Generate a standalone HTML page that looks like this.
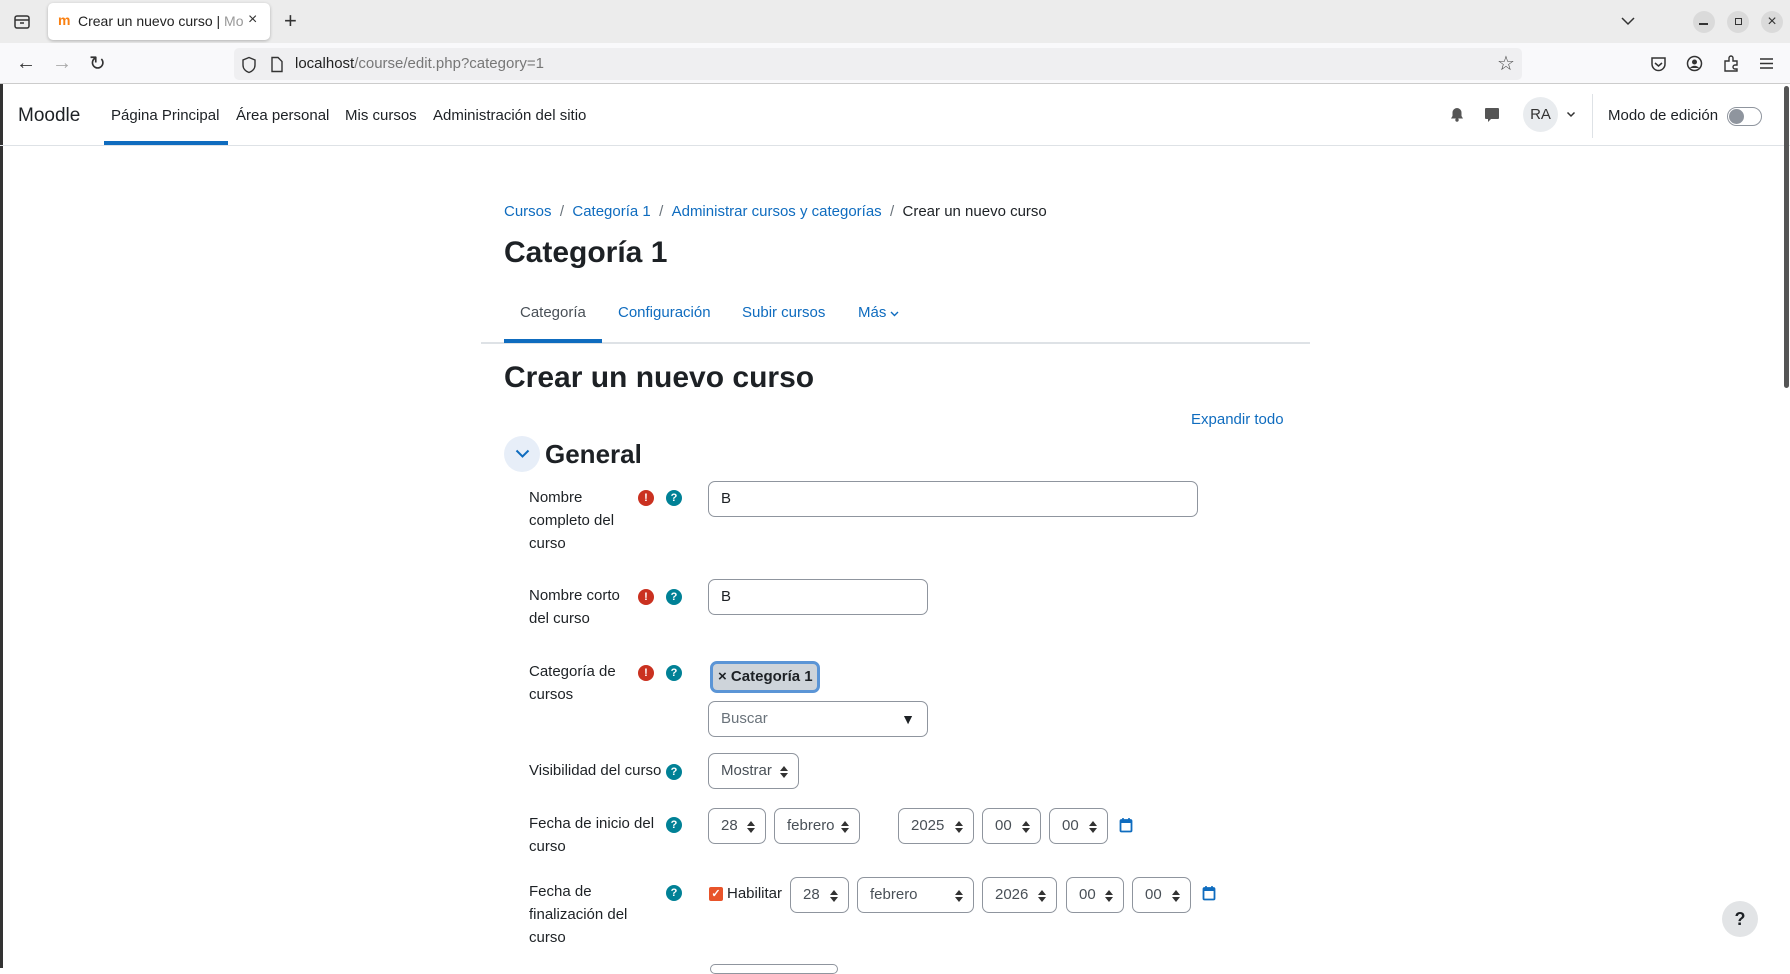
<!DOCTYPE html>
<html><head><meta charset="utf-8">
<style>
*{box-sizing:border-box;margin:0;padding:0}
body{width:1790px;height:968px;overflow:hidden;background:#fff;font-family:"Liberation Sans",sans-serif;color:#1d2125;position:relative}
.a{position:absolute;white-space:nowrap}
.lnk{color:#0f6cbf}
.sel{position:absolute;border:1px solid #8f959e;border-radius:7px;height:36px;font-size:15px;color:#495057;line-height:34px;padding-left:12px;background:#fff}
.sel svg{position:absolute;right:10px;top:12px}
.lab{position:absolute;left:529px;font-size:15px;line-height:22.8px;color:#1d2125}
.ex{position:absolute;width:16px;height:16px;border-radius:50%;background:#ca3120;color:#fff;font-size:11px;font-weight:bold;text-align:center;line-height:16px}
.q{position:absolute;width:16px;height:16px;border-radius:50%;background:#008196;color:#fff;font-size:11px;font-weight:bold;text-align:center;line-height:16px}
.inp{position:absolute;border:1px solid #8f959e;border-radius:7px;height:36px;font-size:15px;line-height:34px;padding-left:12px;color:#1d2125}
</style></head><body>
<svg width="0" height="0" style="position:absolute"><defs><symbol id="ud" viewBox="0 0 8 12"><path d="M4 0L8 5H0z M0 7h8L4 12z" fill="#333"/></symbol></defs></svg>
<!-- browser tab bar -->
<div class="a" style="left:0;top:0;width:1790px;height:43px;background:#ececec"></div>
<svg class="a" style="left:13px;top:14px" width="18" height="16" viewBox="0 0 18 16"><rect x="2" y="2" width="14" height="12" rx="2" fill="none" stroke="#333" stroke-width="1.5"/><line x1="2" y1="6" x2="16" y2="6" stroke="#333" stroke-width="1.5"/><line x1="7" y1="9" x2="11" y2="9" stroke="#333" stroke-width="1.5"/></svg>
<div class="a" style="left:48px;top:3px;width:222px;height:37px;background:#fff;border-radius:5px;box-shadow:0 1px 3px rgba(0,0,0,.25)"></div>
<div class="a" style="left:58px;top:12px;font-size:14px;color:#f98012;font-weight:bold">m</div>
<div class="a" style="left:78px;top:13px;font-size:14px;color:#222;width:170px;overflow:hidden">Crear un nuevo curso | <span style="color:#999">Mo</span></div>
<div class="a" style="left:248px;top:11px;font-size:16px;color:#333">×</div>
<div class="a" style="left:284px;top:8px;font-size:22px;color:#333">+</div>
<svg class="a" style="left:1620px;top:16px" width="16" height="10"><path d="M2 2l6 6 6-6" fill="none" stroke="#333" stroke-width="1.5"/></svg>
<div class="a" style="left:1693px;top:11px;width:22px;height:22px;border-radius:50%;background:#dadada"></div>
<div class="a" style="left:1699px;top:23px;width:9px;height:1.5px;background:#333"></div>
<div class="a" style="left:1727px;top:11px;width:22px;height:22px;border-radius:50%;background:#dadada"></div>
<div class="a" style="left:1735px;top:18px;width:7px;height:7px;border:1.2px solid #333"></div>
<div class="a" style="left:1761px;top:11px;width:22px;height:22px;border-radius:50%;background:#dadada;text-align:center;font-size:16px;line-height:22px;color:#333">×</div>
<!-- toolbar -->
<div class="a" style="left:0;top:43px;width:1790px;height:41px;background:#f9f9fb;border-bottom:1px solid #ccc"></div>
<div class="a" style="left:16px;top:52px;font-size:20px;color:#333">←</div>
<div class="a" style="left:52px;top:52px;font-size:20px;color:#aaa">→</div>
<div class="a" style="left:89px;top:51px;font-size:20px;color:#333">↻</div>
<div class="a" style="left:234px;top:48px;width:1288px;height:32px;background:#efeff1;border-radius:5px"></div>
<svg class="a" style="left:241px;top:56px" width="16" height="18"><path d="M8 1.5L2 4v5c0 4 3 6.5 6 7.5 3-1 6-3.5 6-7.5V4z" fill="none" stroke="#333" stroke-width="1.4"/></svg>
<svg class="a" style="left:270px;top:56px" width="14" height="17"><path d="M2 1.5h6l4 4v10H2z" fill="none" stroke="#333" stroke-width="1.4"/></svg>
<div class="a" style="left:295px;top:55px;font-size:15px;color:#222">localhost<span style="color:#777">/course/edit.php?category=1</span></div>
<div class="a" style="left:1497px;top:51px;font-size:20px;color:#444">☆</div>
<svg class="a" style="left:1650px;top:56px" width="17" height="16"><path d="M2 2h13v6a6.5 6.5 0 0 1-13 0z" fill="none" stroke="#333" stroke-width="1.5"/><path d="M5 7l3.5 3 3.5-3" fill="none" stroke="#333" stroke-width="1.5"/></svg>
<svg class="a" style="left:1686px;top:55px" width="17" height="17"><circle cx="8.5" cy="8.5" r="7" fill="none" stroke="#333" stroke-width="1.5"/><circle cx="8.5" cy="7" r="2.5" fill="#333"/><path d="M4 13c2-3 7-3 9 0" fill="#333"/></svg>
<svg class="a" style="left:1723px;top:55px" width="17" height="17"><path d="M2 6h4V3a2 2 0 0 1 4 0v3h4v4h-2a2 2 0 0 0 0 4h2v2H2z" fill="none" stroke="#333" stroke-width="1.4"/></svg>
<svg class="a" style="left:1759px;top:57px" width="15" height="13"><path d="M1 2h13M1 6.5h13M1 11h13" stroke="#333" stroke-width="1.5"/></svg>
<!-- moodle navbar -->
<div class="a" style="left:0;top:84px;width:3px;height:884px;background:#333"></div>
<div class="a" style="left:0;top:145px;width:1790px;height:1px;background:#dee2e6"></div>
<div class="a" style="left:18px;top:105px;font-size:19px;color:#1d2125">Moodle</div>
<div class="a" style="left:111px;top:107px;font-size:15px">Página Principal</div>
<div class="a" style="left:104px;top:141px;width:124px;height:4px;background:#0f6cbf"></div>
<div class="a" style="left:236px;top:107px;font-size:15px">Área personal</div>
<div class="a" style="left:345px;top:107px;font-size:15px">Mis cursos</div>
<div class="a" style="left:433px;top:107px;font-size:15px">Administración del sitio</div>
<svg class="a" style="left:1450px;top:107px" width="14" height="15"><path d="M7 1a4.5 4.5 0 0 0-4.5 4.5V9L1 11.5h12L11.5 9V5.5A4.5 4.5 0 0 0 7 1z" fill="#555"/><circle cx="7" cy="13" r="1.7" fill="#555"/></svg>
<svg class="a" style="left:1484px;top:107px" width="16" height="16"><path d="M2 1h12a1 1 0 0 1 1 1v9a1 1 0 0 1-1 1H7l-3 3v-3H2a1 1 0 0 1-1-1V2a1 1 0 0 1 1-1z" fill="#555"/></svg>
<div class="a" style="left:1523px;top:97px;width:35px;height:35px;border-radius:50%;background:#e9ecef;text-align:center;line-height:35px;font-size:15px;color:#333">RA</div>
<svg class="a" style="left:1566px;top:111px" width="10" height="7"><path d="M1.5 1.5l3.5 3.5 3.5-3.5" fill="none" stroke="#333" stroke-width="1.5"/></svg>
<div class="a" style="left:1592px;top:94px;width:1px;height:44px;background:#dee2e6"></div>
<div class="a" style="left:1608px;top:107px;font-size:15px">Modo de edición</div>
<div class="a" style="left:1727px;top:107px;width:35px;height:19px;border-radius:10px;border:1px solid #8f959e;background:#fff"></div>
<div class="a" style="left:1729px;top:109px;width:15px;height:15px;border-radius:50%;background:#8f959e"></div>
<div class="a" style="left:1784px;top:86px;width:5px;height:302px;background:#555;border-radius:3px"></div>
<!-- page header -->
<div class="a" style="left:504px;top:203px;font-size:15px"><span class="lnk">Cursos</span><span style="color:#6a737b">&nbsp; / &nbsp;</span><span class="lnk">Categoría 1</span><span style="color:#6a737b">&nbsp; / &nbsp;</span><span class="lnk">Administrar cursos y categorías</span><span style="color:#6a737b">&nbsp; / &nbsp;</span>Crear un nuevo curso</div>
<div class="a" style="left:504px;top:236px;font-size:30px;font-weight:bold">Categoría 1</div>
<div class="a" style="left:520px;top:304px;font-size:15px;color:#495057">Categoría</div>
<div class="a" style="left:618px;top:304px;font-size:15px"><span class="lnk">Configuración</span></div>
<div class="a" style="left:742px;top:304px;font-size:15px"><span class="lnk">Subir cursos</span></div>
<div class="a" style="left:858px;top:304px;font-size:15px"><span class="lnk">Más</span></div>
<svg class="a" style="left:890px;top:311px" width="9" height="6"><path d="M1 1l3.5 3.5L8 1" fill="none" stroke="#0f6cbf" stroke-width="1.4"/></svg>
<div class="a" style="left:481px;top:342px;width:829px;height:2px;background:#dee2e6"></div>
<div class="a" style="left:504px;top:339px;width:98px;height:4px;background:#0f6cbf"></div>
<div class="a" style="left:504px;top:361px;font-size:30px;font-weight:bold">Crear un nuevo curso</div>
<div class="a lnk" style="left:1191px;top:411px;font-size:15px">Expandir todo</div>
<div class="a" style="left:504px;top:436px;width:36px;height:36px;border-radius:50%;background:#e7eef8"></div>
<svg class="a" style="left:515px;top:449px" width="15" height="10"><path d="M1.5 1.5l6 6 6-6" fill="none" stroke="#0f6cbf" stroke-width="2"/></svg>
<div class="a" style="left:545px;top:439px;font-size:26px;font-weight:bold">General</div>
<!-- rows -->
<div class="lab" style="top:487px">Nombre<br>completo del<br>curso</div>
<div class="ex" style="left:638px;top:490px">!</div><div class="q" style="left:666px;top:490px">?</div>
<div class="inp" style="left:708px;top:481px;width:490px">B</div>

<div class="lab" style="top:585px">Nombre corto<br>del curso</div>
<div class="ex" style="left:638px;top:589px">!</div><div class="q" style="left:666px;top:589px">?</div>
<div class="inp" style="left:708px;top:579px;width:220px">B</div>

<div class="lab" style="top:661px">Categoría de<br>cursos</div>
<div class="ex" style="left:638px;top:665px">!</div><div class="q" style="left:666px;top:665px">?</div>
<div class="a" style="left:710px;top:661px;width:110px;height:32px;border:3px solid #5b95d6;border-radius:7px;background:#ced4da;font-size:15px;font-weight:bold;line-height:26px;padding-left:5px;color:#1d2125">× Categoría 1</div>
<div class="inp" style="left:708px;top:701px;width:220px;color:#6a737b">Buscar<span style="position:absolute;right:12px;color:#1d2125;font-size:14px">▼</span></div>

<div class="lab" style="top:760px">Visibilidad del curso</div>
<div class="q" style="left:666px;top:764px">?</div>
<div class="sel" style="left:708px;top:753px;width:91px">Mostrar<svg width="8" height="12"><use href="#ud"/></svg></div>

<div class="lab" style="top:813px">Fecha de inicio del<br>curso</div>
<div class="q" style="left:666px;top:817px">?</div>
<div class="sel" style="left:708px;top:808px;width:58px">28<svg width="8" height="12"><use href="#ud"/></svg></div>
<div class="sel" style="left:774px;top:808px;width:86px">febrero<svg width="8" height="12"><use href="#ud"/></svg></div>
<div class="sel" style="left:898px;top:808px;width:76px">2025<svg width="8" height="12"><use href="#ud"/></svg></div>
<div class="sel" style="left:982px;top:808px;width:59px">00<svg width="8" height="12"><use href="#ud"/></svg></div>
<div class="sel" style="left:1049px;top:808px;width:59px">00<svg width="8" height="12"><use href="#ud"/></svg></div>
<svg class="a" style="left:1119px;top:817px" width="14" height="16"><rect x="1.5" y="3" width="11" height="11.5" rx="1" fill="none" stroke="#0f6cbf" stroke-width="1.8"/><rect x="1.5" y="3" width="11" height="3" fill="#0f6cbf"/><path d="M4 1v3M10 1v3" stroke="#0f6cbf" stroke-width="1.6"/></svg>

<div class="lab" style="top:881px">Fecha de<br>finalización del<br>curso</div>
<div class="q" style="left:666px;top:885px">?</div>
<div class="a" style="left:709px;top:887px;width:14px;height:14px;border-radius:2px;background:#e8542a;color:#fff;font-size:11px;text-align:center;line-height:14px;font-weight:bold">✓</div>
<div class="a" style="left:727px;top:885px;font-size:15px">Habilitar</div>
<div class="sel" style="left:790px;top:877px;width:59px">28<svg width="8" height="12"><use href="#ud"/></svg></div>
<div class="sel" style="left:857px;top:877px;width:117px">febrero<svg width="8" height="12"><use href="#ud"/></svg></div>
<div class="sel" style="left:982px;top:877px;width:75px">2026<svg width="8" height="12"><use href="#ud"/></svg></div>
<div class="sel" style="left:1066px;top:877px;width:58px">00<svg width="8" height="12"><use href="#ud"/></svg></div>
<div class="sel" style="left:1132px;top:877px;width:59px">00<svg width="8" height="12"><use href="#ud"/></svg></div>
<svg class="a" style="left:1202px;top:885px" width="14" height="16"><rect x="1.5" y="3" width="11" height="11.5" rx="1" fill="none" stroke="#0f6cbf" stroke-width="1.8"/><rect x="1.5" y="3" width="11" height="3" fill="#0f6cbf"/><path d="M4 1v3M10 1v3" stroke="#0f6cbf" stroke-width="1.6"/></svg>

<div class="a" style="left:710px;top:964px;width:128px;height:10px;border:1px solid #8f959e;border-radius:7px"></div>
<div class="a" style="left:1722px;top:901px;width:36px;height:36px;border-radius:50%;background:#e2e4e6;text-align:center;line-height:36px;font-size:18px;font-weight:bold;color:#1d2125">?</div>
</body></html>
